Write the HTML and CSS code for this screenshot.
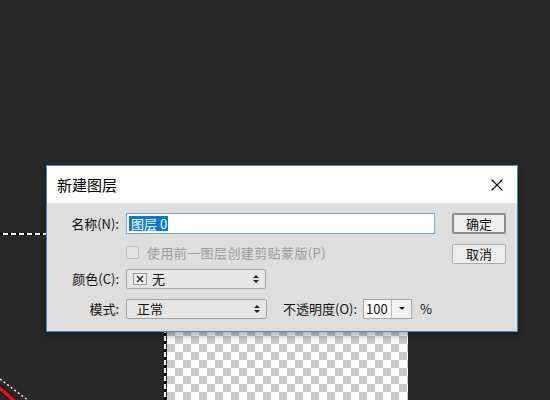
FILE: index.html
```html
<!DOCTYPE html>
<html lang="zh">
<head>
<meta charset="utf-8">
<title>新建图层</title>
<link rel="stylesheet" href="styles.css">
</head>
<body>
<div class="stage">
  <div class="marquee-h"></div>
  <div class="marquee-v"></div>
  <div class="checker"></div>
  <svg class="arc" width="40" height="30" viewBox="0 0 40 30">
    <line x1="-3" y1="16" x2="17" y2="33" stroke="#141414" stroke-width="6"/>
    <line x1="-3" y1="16" x2="17" y2="33" stroke="#e41212" stroke-width="3.5"/>
    <line x1="0" y1="9" x2="29" y2="31" stroke="#ffffff" stroke-width="1.4" stroke-dasharray="2 2.5"/>
  </svg>

  <div class="dialog">
    <div class="titlebar">
      <span class="title">新建图层</span>
      <svg class="close" width="12" height="12" viewBox="0 0 12 12">
        <path d="M0.5 0.5 L11.5 11.5 M11.5 0.5 L0.5 11.5" stroke="#111" stroke-width="1.1" fill="none"/>
      </svg>
    </div>
    <div class="body">
      <div class="form">
        <span class="lbl">名称(N):</span>
        <div class="text-input"><span class="selected">图层 0</span></div>

        <span class="spacer"></span>
        <div class="check-row"><span class="checkbox"></span><span class="check-text">使用前一图层创建剪贴蒙版(P)</span></div>

        <span class="lbl">颜色(C):</span>
        <div class="select">
          <span class="swatch"><svg width="8" height="8" viewBox="0 0 8 8"><path d="M1 1 L7 7 M7 1 L1 7" stroke="#333" stroke-width="1.6"/></svg></span>
          <span class="select-text">无</span>
          <svg class="spin" width="6" height="10" viewBox="0 0 6 10"><path d="M0 4 L3 1 L6 4 Z M0 6 L3 9 L6 6 Z" fill="#222"/></svg>
        </div>

        <span class="lbl">模式:</span>
        <div class="mode-row">
          <div class="select mode">
            <span class="select-text pad">正常</span>
            <svg class="spin" width="6" height="10" viewBox="0 0 6 10"><path d="M0 4 L3 1 L6 4 Z M0 6 L3 9 L6 6 Z" fill="#222"/></svg>
          </div>
          <span class="op-label">不透明度(O):</span>
          <div class="num-input">
            <span class="num">100</span>
            <span class="drop"><svg width="6" height="4" viewBox="0 0 6 4"><path d="M0 0 L6 0 L3 3 Z" fill="#222"/></svg></span>
          </div>
          <span class="pct">%</span>
        </div>
      </div>
      <div class="buttons">
        <button class="btn default">确定</button>
        <button class="btn cancel">取消</button>
      </div>
    </div>
  </div>
</div>
</body>
</html>
```

FILE: styles.css
```css
html, body {
  margin: 0;
  padding: 0;
}
body {
  background: #282828;
  font-family: "Noto Sans CJK SC", "Noto Sans", sans-serif;
  font-size: 13px;
  color: #111;
}
.stage {
  position: relative;
  width: 550px;
  height: 400px;
  overflow: hidden;
  background: #282828;
}
.marquee-h {
  position: absolute;
  left: 0;
  top: 233px;
  width: 47px;
  height: 2px;
  background: repeating-linear-gradient(90deg, #000 0 3px, #fff 3px 8px);
}
.marquee-v {
  position: absolute;
  left: 164px;
  top: 200px;
  width: 2px;
  height: 200px;
  background: repeating-linear-gradient(180deg, #fff 0 5px, #000 5px 8px);
}
.checker {
  position: absolute;
  left: 167px;
  top: 320px;
  width: 241px;
  height: 80px;
  background: conic-gradient(#cbcbcb 25%, #ffffff 0 50%, #cbcbcb 0 75%, #ffffff 0) 0 0 / 16px 16px;
}
.arc {
  position: absolute;
  left: 0;
  top: 370px;
}
.dialog {
  position: absolute;
  left: 46px;
  top: 165px;
  width: 470px;
  border: 1px solid #4b8bc9;
  background: #dedede;
  box-shadow: 0 3px 8px rgba(0, 0, 0, 0.35);
}
.titlebar {
  height: 37px;
  background: #ffffff;
  display: flex;
  align-items: center;
  justify-content: space-between;
  padding: 0 14px 0 10px;
}
.title {
  font-size: 15px;
  line-height: 20px;
  color: #000;
}
.close {
  display: block;
  margin-top: 1px;
}
.body {
  display: flex;
  padding: 10px 11px 12px 0;
}
.form {
  display: grid;
  grid-template-columns: 72px 309px;
  grid-template-rows: 21px 25px 30px 30px;
  column-gap: 7px;
  align-items: center;
}
.form > :nth-child(3), .form > :nth-child(4) {
  margin-top: 12px;
}
.form > :nth-child(5), .form > :nth-child(6),
.form > :nth-child(7), .form > :nth-child(8) {
  margin-top: 10px;
}
.lbl {
  text-align: right;
  line-height: 18px;
  color: #111;
}
.text-input {
  height: 21px;
  box-sizing: border-box;
  border: 1px solid #7aa6d4;
  background: #fff;
  display: flex;
  align-items: center;
  padding-left: 2px;
}
.selected {
  background: #0a78d7;
  color: #fff;
  line-height: 15px;
  padding: 0 1px 0 2px;
}
.check-row {
  display: flex;
  align-items: center;
  height: 13px;
}
.checkbox {
  width: 13px;
  height: 13px;
  box-sizing: border-box;
  border: 1px solid #bdbdbd;
  border-radius: 2px;
  background: #e4e4e4;
  margin-right: 8px;
}
.check-text {
  color: #9c9c9c;
  letter-spacing: 0.4px;
  line-height: 16px;
}
.select {
  width: 140px;
  height: 20px;
  box-sizing: border-box;
  border: 1px solid #a5a5a5;
  border-radius: 2px;
  background: #e6e6e6;
  display: flex;
  align-items: center;
  padding: 0 6px;
}
.select.mode {
  width: 141px;
}
.swatch {
  width: 14px;
  height: 12px;
  box-sizing: border-box;
  border: 1px solid #9a9a9a;
  background: #efefef;
  display: flex;
  align-items: center;
  justify-content: center;
  margin-right: 5px;
}
.swatch svg {
  display: block;
}
.select-text {
  flex: 1;
  line-height: 16px;
}
.select-text.pad {
  padding-left: 4px;
}
.spin {
  display: block;
}
.mode-row {
  display: flex;
  align-items: center;
  height: 20px;
}
.op-label {
  margin-left: 16px;
  line-height: 16px;
}
.num-input {
  margin-left: 6px;
  width: 49px;
  height: 20px;
  box-sizing: border-box;
  border: 1px solid #a5a5a5;
  background: #fff;
  display: flex;
}
.num {
  width: 28px;
  line-height: 18px;
  padding-left: 2px;
  box-sizing: border-box;
  border-right: 1px solid #b5b5b5;
}
.drop {
  flex: 1;
  background: #f2f2f2;
  display: flex;
  align-items: center;
  justify-content: center;
}
.drop svg {
  display: block;
}
.pct {
  margin-left: 8px;
  line-height: 16px;
}
.buttons {
  margin-left: 17px;
  display: flex;
  flex-direction: column;
  gap: 10px;
}
.btn {
  width: 54px;
  box-sizing: border-box;
  font-family: "Noto Sans CJK SC", "Noto Sans", sans-serif;
  font-size: 13px;
  line-height: 16px;
  color: #111;
  background: #eeeeee;
  border-radius: 2px;
  padding: 0;
  margin: 0;
}
.btn.default {
  height: 21px;
  border: 2px solid #8d8d8d;
}
.btn.cancel {
  height: 20px;
  border: 1px solid #adadad;
}
```
